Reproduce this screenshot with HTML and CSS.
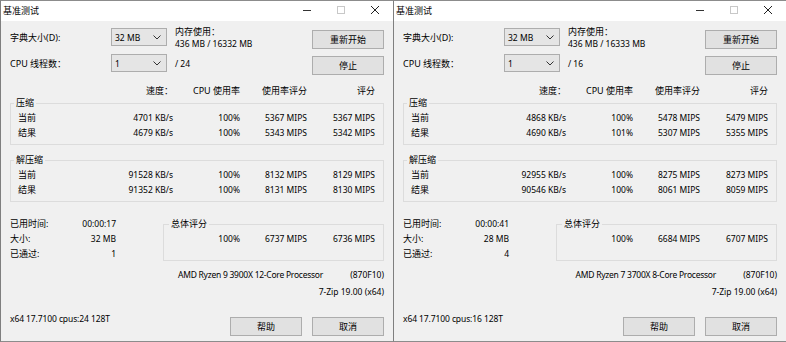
FILE: index.html
```html
<!doctype html>
<html lang="zh-CN">
<head>
    <meta charset="utf-8">
    <title>基准测试</title>
    <link rel="stylesheet" href="styles.css">
</head>
<body>
<div class="desktop">

    <div class="window">
        <div class="titlebar">
            <span class="title">基准测试</span>
            <div class="caption">
                <span class="cap-btn"><svg width="10" height="10"><path d="M1 5.5h8" stroke="#333"/></svg></span>
                <span class="cap-btn"><svg width="10" height="10"><rect x="1.5" y="1.5" width="7" height="7" fill="none" stroke="#c8c8c8"/></svg></span>
                <span class="cap-btn"><svg width="10" height="10"><path d="M1 1l8 8M9 1l-8 8" stroke="#222"/></svg></span>
            </div>
        </div>
        <div class="body">
            <div class="top">
                <div class="settings">
                    <span>字典大小(D):</span>
                    <div class="combo"><span class="lat">32 MB</span><svg width="8" height="5"><path d="M0.5 0.5l3.5 3.5 3.5-3.5" fill="none" stroke="#333"/></svg></div>
                    <div class="mem"><div>内存使用：</div><div class="lat">436 MB / 16332 MB</div></div>
                    <span>CPU 线程数：</span>
                    <div class="combo"><span class="lat">1</span><svg width="8" height="5"><path d="M0.5 0.5l3.5 3.5 3.5-3.5" fill="none" stroke="#333"/></svg></div>
                    <span class="threads lat">/ 24</span>
                </div>
                <div class="actions">
                    <button>重新开始</button>
                    <button>停止</button>
                </div>
            </div>

            <div class="cols head">
                <span></span>
                <span class="num">速度：</span>
                <span class="num">CPU 使用率</span>
                <span class="num">使用率评分</span>
                <span class="num">评分</span>
            </div>

            <fieldset class="group">
                <legend>压缩</legend>
                <div class="cols">
                    <span>当前</span><span class="num lat">4701 KB/s</span><span class="num lat">100%</span><span class="num lat">5367 MIPS</span><span class="num lat">5367 MIPS</span>
                    <span>结果</span><span class="num lat">4679 KB/s</span><span class="num lat">100%</span><span class="num lat">5343 MIPS</span><span class="num lat">5342 MIPS</span>
                </div>
            </fieldset>

            <fieldset class="group second">
                <legend>解压缩</legend>
                <div class="cols">
                    <span>当前</span><span class="num lat">91528 KB/s</span><span class="num lat">100%</span><span class="num lat">8132 MIPS</span><span class="num lat">8129 MIPS</span>
                    <span>结果</span><span class="num lat">91352 KB/s</span><span class="num lat">100%</span><span class="num lat">8131 MIPS</span><span class="num lat">8130 MIPS</span>
                </div>
            </fieldset>

            <div class="lower">
                <div class="stats">
                    <span>已用时间:</span><span class="num lat">00:00:17</span>
                    <span>大小:</span><span class="num lat">32 MB</span>
                    <span>已通过:</span><span class="num lat">1</span>
                </div>
                <fieldset class="group total">
                    <legend>总体评分</legend>
                    <div class="total-row">
                        <span class="num lat">100%</span><span class="num lat">6737 MIPS</span><span class="num lat">6736 MIPS</span>
                    </div>
                </fieldset>
            </div>

            <div class="cpu lat">
                <span class="cpu-name">AMD Ryzen 9 3900X 12-Core Processor</span>
                <span class="cpu-id">(870F10)</span>
            </div>
            <div class="ver lat">7-Zip 19.00 (x64)</div>

            <div class="footer">
                <span class="sys lat">x64 17.7100 cpus:24 128T</span>
                <div class="footer-btns">
                    <button>帮助</button>
                    <button>取消</button>
                </div>
            </div>
        </div>
    </div>

    <div class="window">
        <div class="titlebar">
            <span class="title">基准测试</span>
            <div class="caption">
                <span class="cap-btn"><svg width="10" height="10"><path d="M1 5.5h8" stroke="#333"/></svg></span>
                <span class="cap-btn"><svg width="10" height="10"><rect x="1.5" y="1.5" width="7" height="7" fill="none" stroke="#c8c8c8"/></svg></span>
                <span class="cap-btn"><svg width="10" height="10"><path d="M1 1l8 8M9 1l-8 8" stroke="#222"/></svg></span>
            </div>
        </div>
        <div class="body">
            <div class="top">
                <div class="settings">
                    <span>字典大小(D):</span>
                    <div class="combo"><span class="lat">32 MB</span><svg width="8" height="5"><path d="M0.5 0.5l3.5 3.5 3.5-3.5" fill="none" stroke="#333"/></svg></div>
                    <div class="mem"><div>内存使用：</div><div class="lat">436 MB / 16333 MB</div></div>
                    <span>CPU 线程数：</span>
                    <div class="combo"><span class="lat">1</span><svg width="8" height="5"><path d="M0.5 0.5l3.5 3.5 3.5-3.5" fill="none" stroke="#333"/></svg></div>
                    <span class="threads lat">/ 16</span>
                </div>
                <div class="actions">
                    <button>重新开始</button>
                    <button>停止</button>
                </div>
            </div>

            <div class="cols head">
                <span></span>
                <span class="num">速度：</span>
                <span class="num">CPU 使用率</span>
                <span class="num">使用率评分</span>
                <span class="num">评分</span>
            </div>

            <fieldset class="group">
                <legend>压缩</legend>
                <div class="cols">
                    <span>当前</span><span class="num lat">4868 KB/s</span><span class="num lat">100%</span><span class="num lat">5478 MIPS</span><span class="num lat">5479 MIPS</span>
                    <span>结果</span><span class="num lat">4690 KB/s</span><span class="num lat">101%</span><span class="num lat">5307 MIPS</span><span class="num lat">5355 MIPS</span>
                </div>
            </fieldset>

            <fieldset class="group second">
                <legend>解压缩</legend>
                <div class="cols">
                    <span>当前</span><span class="num lat">92955 KB/s</span><span class="num lat">100%</span><span class="num lat">8275 MIPS</span><span class="num lat">8273 MIPS</span>
                    <span>结果</span><span class="num lat">90546 KB/s</span><span class="num lat">100%</span><span class="num lat">8061 MIPS</span><span class="num lat">8059 MIPS</span>
                </div>
            </fieldset>

            <div class="lower">
                <div class="stats">
                    <span>已用时间:</span><span class="num lat">00:00:41</span>
                    <span>大小:</span><span class="num lat">28 MB</span>
                    <span>已通过:</span><span class="num lat">4</span>
                </div>
                <fieldset class="group total">
                    <legend>总体评分</legend>
                    <div class="total-row">
                        <span class="num lat">100%</span><span class="num lat">6684 MIPS</span><span class="num lat">6707 MIPS</span>
                    </div>
                </fieldset>
            </div>

            <div class="cpu lat">
                <span class="cpu-name">AMD Ryzen 7 3700X 8-Core Processor</span>
                <span class="cpu-id">(870F10)</span>
            </div>
            <div class="ver lat">7-Zip 19.00 (x64)</div>

            <div class="footer">
                <span class="sys lat">x64 17.7100 cpus:16 128T</span>
                <div class="footer-btns">
                    <button>帮助</button>
                    <button>取消</button>
                </div>
            </div>
        </div>
    </div>

</div>
</body>
</html>
```

FILE: styles.css
```css
* {
    box-sizing: border-box;
}
body {
    margin: 0;
    font-family: "Noto Sans", "Noto Sans CJK SC", sans-serif;
    font-size: 9px;
    color: #000;
    background: #fff;
}
.lat {
    font-size: 8.5px;
}
.desktop {
    display: flex;
    width: 786px;
    height: 342px;
}
.window {
    width: 393px;
    height: 342px;
    display: flex;
    flex-direction: column;
    background: #f0f0f0;
    border-left: 1px solid #7f7f7f;
    border-top: 1px solid #8c8c8c;
    border-bottom: 1px solid #8c8c8c;
}
.titlebar {
    height: 20px;
    flex-shrink: 0;
    display: flex;
    align-items: center;
    justify-content: space-between;
    background: #fff;
}
.title {
    padding-left: 2px;
    margin-top: -2px;
}
.caption {
    display: flex;
    margin-right: 1px;
    margin-top: -2px;
}
.cap-btn {
    width: 34px;
    height: 18px;
    display: flex;
    align-items: center;
    justify-content: center;
}
.body {
    padding: 7px 9px 0 9px;
}
.top {
    display: flex;
    justify-content: space-between;
}
.settings {
    display: grid;
    grid-template-columns: 101px 56px auto;
    grid-auto-rows: 18px;
    row-gap: 8px;
    align-items: center;
}
.combo {
    height: 18px;
    display: flex;
    align-items: center;
    justify-content: space-between;
    padding: 0 5px 0 3px;
    background: #e5e5e5;
    border: 1px solid #adadad;
}
.mem {
    align-self: start;
    margin: -2px 0 0 8px;
    line-height: 12px;
}
.threads {
    margin-left: 8px;
}
.actions {
    display: flex;
    flex-direction: column;
    gap: 7px;
    margin-top: 2px;
}
button {
    width: 72px;
    height: 19px;
    padding: 0;
    font: inherit;
    color: #000;
    background: #e1e1e1;
    border: 1px solid #adadad;
}
.cols {
    display: grid;
    grid-template-columns: 60px 1fr 67px 67px 68px;
    line-height: 15px;
}
.head {
    margin-top: 10px;
    padding: 0 9px 0 8px;
    line-height: 12px;
}
.num {
    text-align: right;
    white-space: nowrap;
}
.group {
    margin: 0;
    min-width: 0;
    padding: 1px 8px 4px 7px;
    border: 1px solid #dcdcdc;
}
.group legend {
    margin-left: -4px;
    padding: 0 2px;
    line-height: 12px;
}
.second {
    margin-top: 9px;
}
.lower {
    display: flex;
    gap: 47px;
    margin-top: 14px;
}
.stats {
    width: 106px;
    display: grid;
    grid-template-columns: 1fr auto;
    line-height: 15px;
}
.total {
    flex: 1;
    margin-top: 2px;
    padding-bottom: 9px;
}
.total legend {
    margin-left: -2px;
}
.total-row {
    display: grid;
    grid-template-columns: 1fr 67px 68px;
    line-height: 15px;
}
.cpu {
    display: flex;
    justify-content: flex-end;
    margin-top: 5px;
    line-height: 17px;
}
.cpu-name {
    letter-spacing: -0.25px;
}
.cpu-id {
    width: 61px;
    text-align: right;
}
.ver {
    text-align: right;
    line-height: 17px;
}
.footer {
    display: flex;
    justify-content: space-between;
    margin-top: 13px;
}
.sys {
    line-height: 12px;
    letter-spacing: -0.1px;
}
.footer-btns {
    display: flex;
    gap: 10px;
    margin-top: 4px;
}
```
